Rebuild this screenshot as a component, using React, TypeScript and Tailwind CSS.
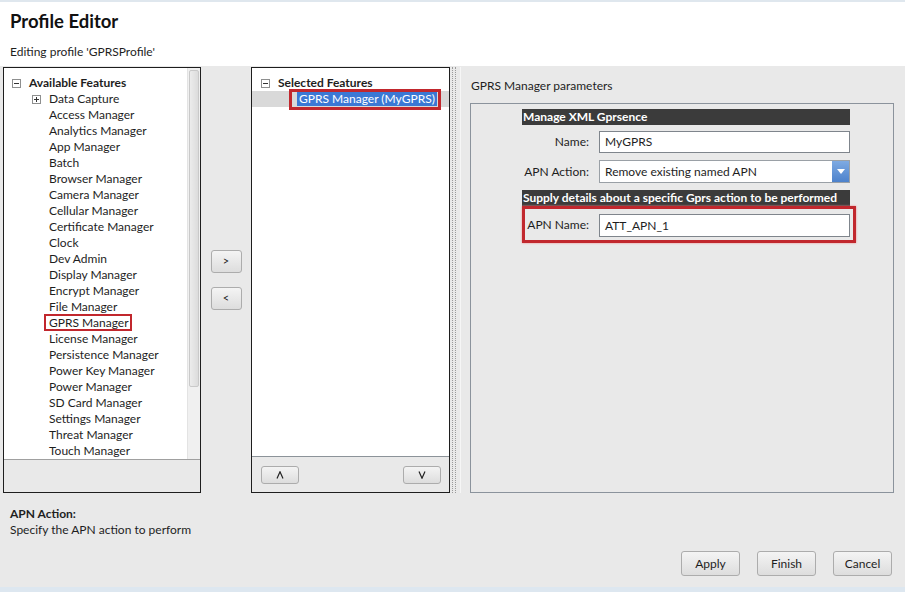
import React from "react";

const features = [
  "Access Manager",
  "Analytics Manager",
  "App Manager",
  "Batch",
  "Browser Manager",
  "Camera Manager",
  "Cellular Manager",
  "Certificate Manager",
  "Clock",
  "Dev Admin",
  "Display Manager",
  "Encrypt Manager",
  "File Manager",
  "GPRS Manager",
  "License Manager",
  "Persistence Manager",
  "Power Key Manager",
  "Power Manager",
  "SD Card Manager",
  "Settings Manager",
  "Threat Manager",
  "Touch Manager",
];

function TreeBox({ plus }: { plus?: boolean }) {
  return (
    <span className="relative inline-block w-[9px] h-[9px] border border-[#8e8f8f] bg-white">
      <span className="absolute left-[1px] top-[3px] w-[5px] h-[1px] bg-[#333]" />
      {plus && <span className="absolute left-[3px] top-[1px] w-[1px] h-[5px] bg-[#333]" />}
    </span>
  );
}

function WinButton({ children, className }: { children: React.ReactNode; className?: string }) {
  return (
    <div
      className={
        "flex items-center justify-center rounded-[3px] border border-[#acacac] bg-gradient-to-b from-[#f4f4f4] to-[#dddddd] text-[#1e1e1e] " +
        (className ?? "")
      }
    >
      {children}
    </div>
  );
}

export default function App() {
  return (
    <div className="w-[905px] h-[592px] overflow-hidden bg-[#e9e9e9] flex flex-col font-['Lato',sans-serif] text-[12px] text-[#1e1e1e]">
      {/* Header */}
      <div className="h-[66px] bg-white border-t-2 border-[#dfe7ee] px-[10px] shrink-0">
        <div className="mt-[8px] h-[22px] leading-[22px] text-[18.5px] font-bold text-[#111]">Profile Editor</div>
        <div className="mt-[12px] h-[16px] leading-[16px]">Editing profile 'GPRSProfile'</div>
      </div>

      {/* Main */}
      <div className="mt-[1px] h-[426px] flex shrink-0">
        {/* Left panel */}
        <div className="ml-[3px] w-[198px] border border-[#1e1e1e] flex flex-col">
          <div className="flex-1 bg-white flex">
            <div className="flex-1 pt-[7px] relative">
              <div className="flex items-center h-[16px] pl-[8px]">
                <TreeBox />
                <span className="ml-[8px] font-bold">Available Features</span>
              </div>
              <div className="flex items-center h-[16px] pl-[28px]">
                <TreeBox plus />
                <span className="ml-[8px]">Data Capture</span>
              </div>
              {features.map((f) => (
                <div key={f} className="h-[16px] leading-[16px] pl-[45px] whitespace-nowrap">
                  {f === "GPRS Manager" ? (
                    <span className="relative">
                      {f}
                      <span className="absolute -left-[5px] -right-[3px] -top-[1px] -bottom-[1px] border-2 border-[#c1272d]" />
                    </span>
                  ) : (
                    f
                  )}
                </div>
              ))}
            </div>
            <div className="w-[13px] bg-[#f0f0f0] border-l border-[#e3e3e3] pt-[2px] px-[1px]">
              <div className="h-[317px] rounded-[2px] border border-[#c9c9c9] bg-gradient-to-r from-[#ececec] to-[#dcdcdc]" />
            </div>
          </div>
          <div className="h-[36px] border-t border-[#a0a0a0] bg-[#e9e9e9]" />
        </div>

        {/* Move buttons */}
        <div className="w-[50px] flex flex-col items-center justify-center gap-[14px]">
          <WinButton className="w-[31px] h-[23px] text-[11px]">&gt;</WinButton>
          <WinButton className="w-[31px] h-[23px] text-[11px]">&lt;</WinButton>
        </div>

        {/* Middle panel */}
        <div className="w-[199px] border border-[#1e1e1e] flex flex-col">
          <div className="flex-1 bg-white pt-[7px]">
            <div className="flex items-center h-[16px] pl-[9px]">
              <TreeBox />
              <span className="ml-[8px] font-bold">Selected Features</span>
            </div>
            <div className="relative h-[16px] bg-[#d9d9d9] pl-[45px] flex items-center">
              <span className="relative h-[14px] leading-[14px] px-[2px] bg-[#3b78d4] text-white whitespace-nowrap">
                GPRS Manager (MyGPRS)
                <span className="absolute -left-[8px] -right-[4px] -top-[3px] -bottom-[4px] border-[3px] border-[#c1272d]" />
              </span>
            </div>
          </div>
          <div className="h-[36px] border-t border-[#8c9399] bg-[#e9e9e9] flex items-center justify-between pl-[9px] pr-[8px]">
            <WinButton className="w-[38px] h-[18px]">
              <svg width="8" height="8" viewBox="0 0 8 8">
                <polyline points="1,7.5 4,0.8 7,7.5" fill="none" stroke="#222" strokeWidth="1.2" />
              </svg>
            </WinButton>
            <WinButton className="w-[38px] h-[18px]">
              <svg width="8" height="8" viewBox="0 0 8 8">
                <polyline points="1,0.5 4,7.2 7,0.5" fill="none" stroke="#222" strokeWidth="1.2" />
              </svg>
            </WinButton>
          </div>
        </div>

        {/* Splitter */}
        <div className="w-[11px] flex justify-center pl-[2px]">
          <div className="w-[6px] h-full flex gap-[2px]">
            <div className="border-l border-dotted border-[#9a9a9a] h-full" />
            <div className="border-l border-dotted border-[#9a9a9a] h-full" />
          </div>
          <div className="ml-[2px] w-[1px] h-full bg-[#f6f6f6]" />
        </div>

        {/* Right panel */}
        <div className="flex-1 flex flex-col pl-[9px] pr-[11px]">
          <div className="mt-[11px] h-[16px] leading-[16px] pl-[1px]">GPRS Manager parameters</div>
          <div className="mt-[9px] flex-1 border border-[#8b939c] pl-[51px] pt-[5px]">
            <div className="flex flex-col items-start">
              <div className="w-[328px] h-[16px] leading-[16px] bg-[#3b3b3b] text-white font-bold pl-[1px]">
                Manage XML Gprsence
              </div>
              <div className="mt-[6px] w-[328px] h-[22px] flex items-center">
                <div className="w-[67px] text-right">Name:</div>
                <div className="ml-[10px] flex-1 h-[22px] bg-white border border-[#7f858c] pl-[5px] leading-[20px]">MyGPRS</div>
              </div>
              <div className="mt-[7px] w-[328px] h-[23px] flex items-center">
                <div className="w-[67px] text-right">APN Action:</div>
                <div className="ml-[10px] flex-1 h-[23px] bg-white border border-[#9aa0a6] flex">
                  <div className="flex-1 pl-[5px] leading-[21px]">Remove existing named APN</div>
                  <div className="w-[17px] bg-gradient-to-b from-[#7eaae2] to-[#4d82cc] flex items-center justify-center">
                    <svg width="8" height="5" viewBox="0 0 8 5">
                      <path d="M0 0 L8 0 L4 5 Z" fill="#ffffff" />
                    </svg>
                  </div>
                </div>
              </div>
              <div className="mt-[7px] w-[328px] h-[16px] leading-[16px] bg-[#3b3b3b] text-white font-bold pl-[1px] whitespace-nowrap overflow-hidden">
                Supply details about a specific Gprs action to be performed
              </div>
              <div className="w-[334px] h-[37px] border-[3px] border-[#c1272d] shadow-[0_0_2px_#e88] flex items-center pt-[1px]">
                <div className="w-[64px] text-right">APN Name:</div>
                <div className="ml-[10px] w-[251px] h-[23px] bg-white border border-[#7f858c] pl-[5px] leading-[21px]">ATT_APN_1</div>
              </div>
            </div>
          </div>
        </div>
      </div>

      {/* Footer */}
      <div className="flex-1 flex flex-col">
        <div className="pl-[10px] pt-[13px]">
          <div className="h-[16px] leading-[16px] font-bold">APN Action:</div>
          <div className="h-[16px] leading-[16px]">Specify the APN action to perform</div>
        </div>
        <div className="mt-[13px] flex justify-end gap-[17px] pr-[13px]">
          <WinButton className="w-[59px] h-[25px]">Apply</WinButton>
          <WinButton className="w-[59px] h-[25px]">Finish</WinButton>
          <WinButton className="w-[59px] h-[25px]">Cancel</WinButton>
        </div>
        <div className="mt-auto h-[5px] bg-[#dde7f0]" />
      </div>
    </div>
  );
}
